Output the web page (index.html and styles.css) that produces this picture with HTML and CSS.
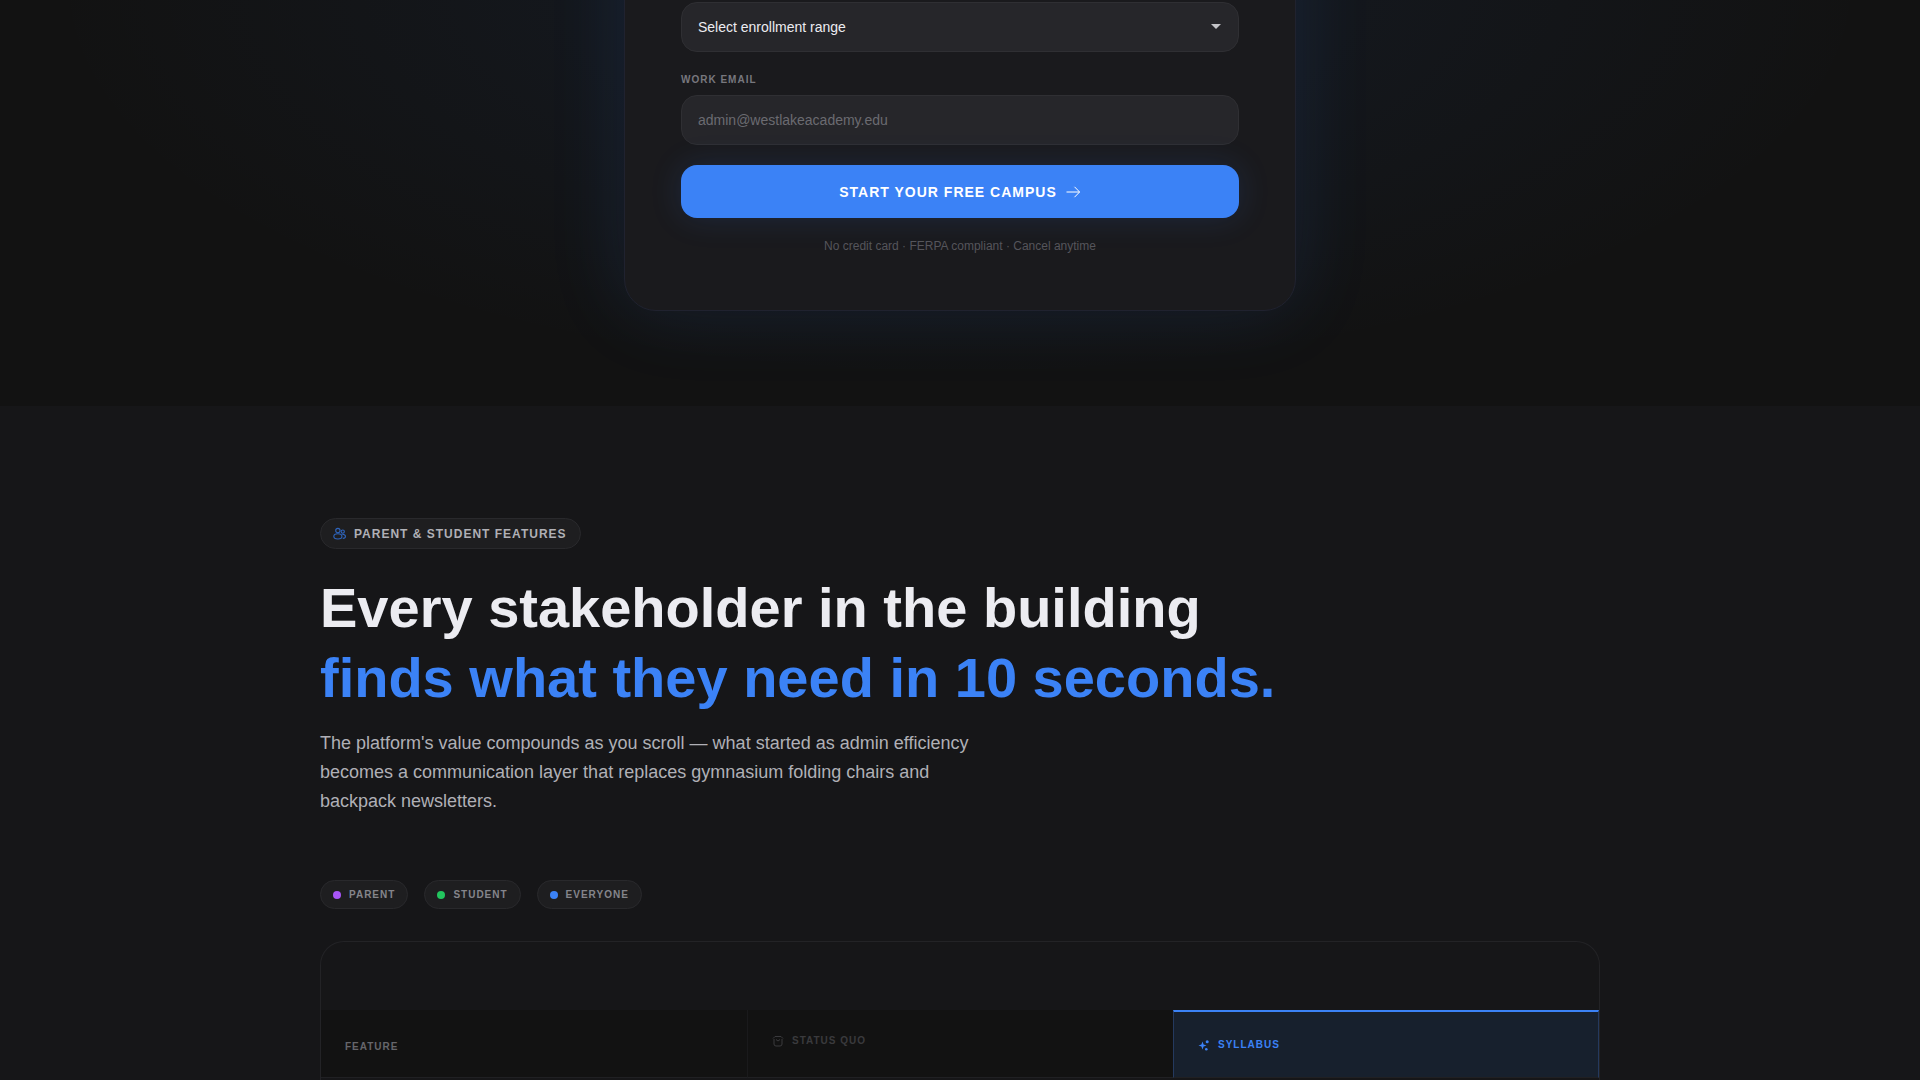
FILE: index.html
```html
<!DOCTYPE html>
<html lang="en">
<head>
    <meta charset="UTF-8">
    <meta name="viewport" content="width=device-width, initial-scale=1.0">
    <title>Syllabus</title>
    <link rel="stylesheet" href="styles.css">
</head>
<body>
    <section class="signup">
        <form class="signup-card">
            <div class="field select-field">
                <select class="control" id="enrollment" aria-label="Enrollment">
                    <option>Select enrollment range</option>
                </select>
                <svg class="caret" viewBox="0 0 10 5" aria-hidden="true"><path d="M0 0h10L5 5z"/></svg>
            </div>
            <div class="field">
                <label class="field-label" for="email">Work Email</label>
                <input class="control" type="email" id="email" placeholder="admin@westlakeacademy.edu">
            </div>
            <button class="submit" type="button">
                Start your free campus
                <svg class="arrow" viewBox="0 0 16 16" aria-hidden="true"><path d="M1.5 8h13M9.5 2.8 14.6 8l-5.1 5.2"/></svg>
            </button>
            <p class="note">No credit card · FERPA compliant · Cancel anytime</p>
        </form>
    </section>

    <section class="features">
        <div class="container">
            <div class="eyebrow">
                <svg class="eyebrow-icon" viewBox="0 0 24 24" aria-hidden="true">
                    <circle cx="9" cy="6.5" r="4"/>
                    <path d="M1.5 17.5c0-3 3.2-5 7.5-5s7.5 2 7.5 5-3 4.500-7.500 4.500-7.500-1.500-7.500-4.500z"/>
                    <circle cx="18" cy="8.500" r="3"/>
                    <path d="M17 13.500c3.500 0 6 1.500 6 4s-2 3.500-5 3.500"/>
                </svg>
                Parent &amp; Student Features
            </div>
            <h2 class="title">Every stakeholder in the building <span class="accent">finds what they need in 10 seconds.</span></h2>
            <p class="lead">The platform's value compounds as you scroll — what started as admin efficiency becomes a communication layer that replaces gymnasium folding chairs and backpack newsletters.</p>

            <ul class="legend">
                <li class="chip"><span class="dot dot-parent"></span>Parent</li>
                <li class="chip"><span class="dot dot-student"></span>Student</li>
                <li class="chip"><span class="dot dot-everyone"></span>Everyone</li>
            </ul>

            <div class="compare">
                <table class="compare-table">
                    <thead>
                        <tr>
                            <th class="col-feature" scope="col">Feature</th>
                            <th class="col-status" scope="col">
                                <span class="col-label">
                                    <svg class="col-icon" viewBox="0 0 12 12" aria-hidden="true"><path d="M1 3.500 3 1.500h6l2 2M2 4v5q0 2 2 2h4q2 0 2-2V4M4 4.500l2 1.500 2-1.500"/></svg>
                                    Status quo
                                </span>
                            </th>
                            <th class="col-syllabus" scope="col">
                                <span class="col-label">
                                    <svg class="col-icon" viewBox="0 0 12 12" aria-hidden="true"><path d="M4.500 2.500 5.600 5.400 8.500 6.500 5.600 7.600 4.500 10.500 3.400 7.600.5 6.500 3.400 5.400z"/><circle cx="9.200" cy="2.700" r="1.500"/><circle cx="8.300" cy="10.300" r="1.300"/></svg>
                                    Syllabus
                                </span>
                            </th>
                        </tr>
                    </thead>
                </table>
            </div>
        </div>
    </section>
</body>
</html>
```
FILE: styles.css
```css
* {
    box-sizing: border-box;
}
body {
    margin: 0;
    background-color: #161618;
    color: #ececf1;
    font-family: "Liberation Sans", Arial, sans-serif;
}

/* Sign-up form */
.signup {
    overflow: hidden;
    padding: 0 24px 95px;
    background: radial-gradient(ellipse 915px 396px at 50% -15px, rgba(59, 130, 246, 0.08), transparent) #121212;
}
.signup-card {
    max-width: 672px;
    margin: -120px auto 0;
    padding: 121px 56px 56px;
    background-color: #1a1a1d;
    border: 1px solid #20222f;
    border-radius: 32px;
    box-shadow: 0 0 80px rgba(59, 130, 246, 0.12);
}
.field {
    margin-bottom: 20px;
}
.select-field {
    position: relative;
}
.field-label {
    display: block;
    margin-bottom: 8px;
    color: #77777d;
    font-size: 10px;
    font-weight: bold;
    line-height: 15px;
    letter-spacing: 1px;
    text-transform: uppercase;
}
.control {
    display: block;
    width: 100%;
    height: 50px;
    padding: 0 16px;
    appearance: none;
    background-color: #26262a;
    border: 1px solid #2f2f33;
    border-radius: 16px;
    color: #ececf1;
    font-family: inherit;
    font-size: 14px;
}
.control::placeholder {
    color: #6b6b71;
}
.caret {
    position: absolute;
    top: 22px;
    right: 18px;
    width: 10px;
    height: 5px;
    fill: #c4c4c8;
    pointer-events: none;
}
.submit {
    display: flex;
    align-items: center;
    justify-content: center;
    gap: 8px;
    width: 100%;
    height: 53px;
    border: none;
    border-radius: 16px;
    background-color: #3b82f6;
    box-shadow: 0 0 32px rgba(59, 130, 246, 0.15);
    color: #fff;
    font-family: inherit;
    font-size: 14px;
    font-weight: bold;
    letter-spacing: 1px;
    text-transform: uppercase;
    cursor: pointer;
}
.arrow {
    width: 16px;
    height: 16px;
    fill: none;
    stroke: #fff;
}
.note {
    margin: 20px 0 0;
    color: #55555b;
    font-size: 12px;
    line-height: 16px;
    text-align: center;
}

/* Parent and student features */
.features {
    padding: 112px 24px 0;
}
.container {
    max-width: 1280px;
    margin: 0 auto;
}
.eyebrow {
    display: inline-flex;
    align-items: center;
    gap: 8px;
    height: 31px;
    padding: 0 13px 0 12px;
    background-color: #1e1e20;
    border: 1px solid #29292c;
    border-radius: 16px;
    color: #b0b0b6;
    font-size: 12px;
    font-weight: bold;
    letter-spacing: 1px;
    text-transform: uppercase;
}
.eyebrow-icon {
    width: 13px;
    height: 13px;
    fill: none;
    stroke: #2f65bd;
    stroke-width: 2;
}
.title {
    margin: 24px 0 16px;
    font-size: 56px;
    line-height: 70px;
}
.accent {
    display: block;
    color: #3b82f6;
}
.lead {
    max-width: 672px;
    margin: 0;
    color: #b0b0b6;
    font-size: 18px;
    line-height: 29px;
}
.legend {
    display: flex;
    gap: 16px;
    margin: 64px 0 32px;
    padding: 0;
    list-style: none;
}
.chip {
    display: flex;
    align-items: center;
    gap: 8px;
    height: 29px;
    padding: 0 12px;
    background-color: #1e1e20;
    border: 1px solid #29292c;
    border-radius: 16px;
    color: #85858b;
    font-size: 10px;
    font-weight: bold;
    letter-spacing: 1px;
    text-transform: uppercase;
}
.dot {
    width: 8px;
    height: 8px;
    border-radius: 50%;
}
.dot-parent {
    background-color: #a855f7;
}
.dot-student {
    background-color: #22c55e;
}
.dot-everyone {
    background-color: #3b82f6;
}

/* Comparison table */
.compare {
    overflow: hidden;
    padding: 68px 0 2px;
    border: 1px solid #232326;
    border-bottom: none;
    border-radius: 24px 24px 0 0;
}
.compare-table {
    width: 100%;
    table-layout: fixed;
    border-collapse: separate;
    border-spacing: 0;
}
.compare-table th {
    height: 68px;
    padding: 6px 24px 0;
    background-color: #121212;
    border-bottom: 1px solid #202023;
    color: #66666b;
    font-size: 10px;
    letter-spacing: 1px;
    text-align: left;
    text-transform: uppercase;
}
.compare-table .col-status {
    padding-top: 0;
    padding-bottom: 6px;
    border-left: 1px solid #1a1a1c;
    color: #3a3a3d;
}
.compare-table .col-syllabus {
    padding-top: 0;
    background-color: #17202d;
    border-top: 2px solid #3b82f6;
    border-right: 1px solid #24395e;
    border-left: 1px solid #24395e;
    color: #3b82f6;
}
.col-label {
    display: flex;
    align-items: center;
    gap: 8px;
}
.col-icon {
    width: 12px;
    height: 12px;
}
.col-status .col-icon {
    fill: none;
    stroke: currentColor;
}
.col-syllabus .col-icon {
    fill: currentColor;
}
```
